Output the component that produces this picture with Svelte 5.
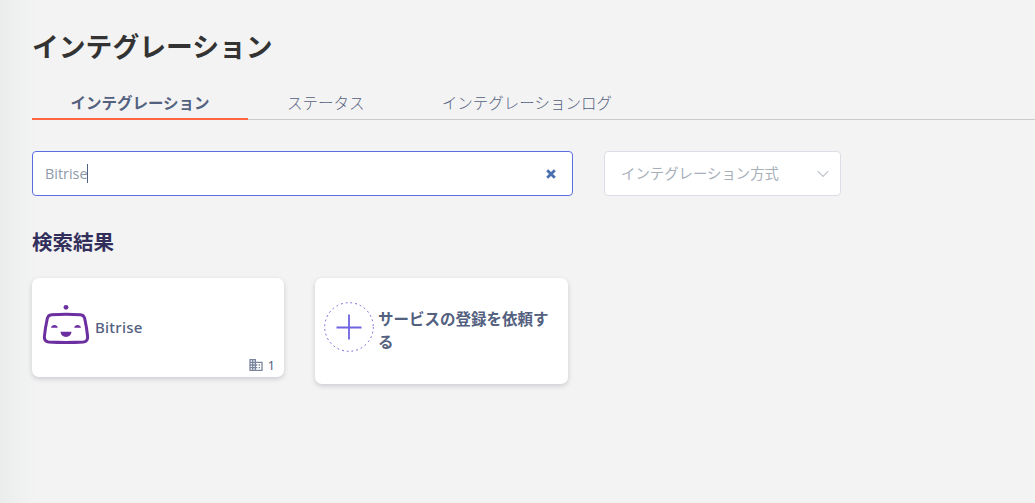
<script lang="ts">
  // Integrations page: tabs, service search and the matching service cards.
  const tabs = [
    { id: "integrations", label: "インテグレーション" },
    { id: "status", label: "ステータス" },
    { id: "logs", label: "インテグレーションログ" },
  ];

  let active = $state("integrations");
  let query = $state("Bitrise");
</script>

<main class="page">
  <h1>インテグレーション</h1>

  <nav class="tabs">
    {#each tabs as tab (tab.id)}
      <button class="tab" class:active={active === tab.id} onclick={() => (active = tab.id)}>{tab.label}</button>
    {/each}
  </nav>

  <div class="filters">
    <div class="search">
      <span class="query">{query}</span>
      <span class="caret"></span>
      <button class="clear" aria-label="clear" onclick={() => (query = "")}>
        <svg width="10" height="10" viewBox="0 0 10 10">
          <path d="M1.2 1.2 8.8 8.8M8.8 1.2 1.2 8.8" stroke="#4a70b0" stroke-width="2.8" />
        </svg>
      </button>
    </div>
    <div class="select">
      <span>インテグレーション方式</span>
      <svg width="12" height="8" viewBox="0 0 12 8">
        <path d="M.8 1.2 6 6.4 11.2 1.2" fill="none" stroke="#bcc1c9" stroke-width="1.1" />
      </svg>
    </div>
  </div>

  <h2>検索結果</h2>

  <div class="cards">
    <article class="card service">
      <svg class="logo" width="48" height="42" viewBox="0 0 48 42">
        <g fill="#6c2fa0">
          <circle cx="24" cy="3.3" r="2.4" />
          <path d="M9 23.8c.3-1.9 1.6-2.8 3.4-2.8s3.1.9 3.4 2.8zM32.2 23.8c.3-1.9 1.6-2.8 3.4-2.8s3.1.9 3.4 2.8z" />
          <path d="M18.5 27.7h11c-.2 3.1-2.4 5.2-5.5 5.2s-5.3-2.1-5.5-5.2z" />
        </g>
        <path
          d="M9.5 10.7Q24 9.9 38.5 10.7Q41.8 10.9 42.7 14.5Q44.8 24 45.6 32.5Q46 37.5 41.5 37.9Q24 38.9 6.5 37.9Q2 37.5 2.4 32.5Q3.2 24 5.3 14.5Q6.2 10.9 9.5 10.7Z"
          fill="none"
          stroke="#6c2fa0"
          stroke-width="3"
        />
      </svg>
      <span class="name latin">Bitrise</span>
      <span class="count">
        <svg width="16" height="16" viewBox="0 0 24 24" fill="#7b879f">
          <path d="M12 7V3H2v18h20V7H12zM6 19H4v-2h2v2zm0-4H4v-2h2v2zm0-4H4V9h2v2zm0-4H4V5h2v2zm4 12H8v-2h2v2zm0-4H8v-2h2v2zm0-4H8V9h2v2zm0-4H8V5h2v2zm10 12h-8v-2h2v-2h-2v-2h2v-2h-2V9h8v10zm-2-8h-2v2h2v-2zm0 4h-2v2h2v-2z" />
        </svg>
        <span class="number">1</span>
      </span>
    </article>

    <article class="card request">
      <svg class="plus" width="50" height="50" viewBox="0 0 50 50" fill="none" stroke="#6f63e0">
        <circle cx="25" cy="25" r="24.3" stroke-dasharray="1.8 3" />
        <path d="M25 12.5v25M12.5 25.5h25" stroke-width="1.8" />
      </svg>
      <span class="name">サービスの登録を依頼する</span>
    </article>
  </div>
</main>

<style>
  :global(body) {
    background: #f3f3f3;
  }
  .page {
    box-sizing: border-box;
    min-height: 503px;
    padding: 27px 0 0 32px;
    background: linear-gradient(90deg, #ebeded 0, #f3f3f3 36px);
    font-family: "Noto Sans", "Noto Sans CJK JP", sans-serif;
    color: #53617f;
  }
  h1 {
    margin: 0;
    font-size: 26.8px;
    line-height: 40px;
    font-weight: 700;
    color: #333;
  }
  button {
    padding: 0;
    border: 0;
    background: none;
    font: inherit;
    color: inherit;
  }
  .tabs {
    display: flex;
    gap: 0.6px;
    height: 52px;
    border-bottom: 1px solid #c8cccb;
  }
  .tab {
    box-sizing: border-box;
    height: 53px;
    padding: 21px 38.4px 1px;
    border-bottom: 2px solid transparent;
    font-size: 15.5px;
    line-height: 28px;
    white-space: nowrap;
    font-weight: 300;
  }
  .tab.active {
    border-color: #ff6542;
    font-weight: 700;
  }
  .filters {
    display: flex;
    gap: 31px;
    margin-top: 31px;
  }
  .search,
  .select {
    box-sizing: border-box;
    display: flex;
    align-items: center;
    height: 45px;
    border: 1px solid #dcdee6;
    border-radius: 4px;
    background: #fff;
    font-size: 14.4px;
    line-height: 20px;
    color: #a7b0b9;
  }
  .search {
    width: 541px;
    padding: 0 16px 0 12px;
    border-color: #5c6fe0;
    color: #8d9aa8;
  }
  .query {
    margin-right: -1px;
    font-family: "Open Sans", sans-serif;
  }
  .caret {
    width: 1px;
    height: 19px;
    background: #53617f;
  }
  .clear {
    display: flex;
    margin-left: auto;
  }
  .select {
    justify-content: space-between;
    width: 237px;
    padding: 0 11px 0 16px;
  }
  h2 {
    margin: 31px 0 0;
    font-size: 20.5px;
    line-height: 30px;
    font-weight: 700;
    color: #322e5c;
  }
  .cards {
    display: flex;
    align-items: flex-start;
    gap: 31px;
    margin-top: 21px;
  }
  .card {
    box-sizing: border-box;
    display: grid;
    border-radius: 7px;
    background: #fff;
    box-shadow: 0 2px 5px rgba(50, 50, 80, 0.2);
  }
  .service {
    grid-template: 74px 25px / 63px 1fr;
    width: 252px;
    height: 99px;
  }
  .logo {
    margin: 26px 0 0 10px;
  }
  .name {
    font-size: 15.5px;
    line-height: 23px;
    font-weight: 700;
  }
  .latin {
    padding-top: 38px;
    font-size: 15px;
    font-weight: 500;
    letter-spacing: 0.25px;
  }
  .count {
    grid-column: 2;
    display: flex;
    justify-content: flex-end;
    align-items: center;
    gap: 4px;
    padding: 1px 9px 0 0;
  }
  .number {
    padding-top: 2px;
    font-size: 12.5px;
    line-height: 16px;
  }
  .request {
    grid-template-columns: 63px 1fr;
    width: 253px;
    height: 106px;
    padding-right: 16px;
  }
  .plus {
    margin: 24px 0 0 9px;
  }
  .request .name {
    padding-top: 30px;
  }
</style>
